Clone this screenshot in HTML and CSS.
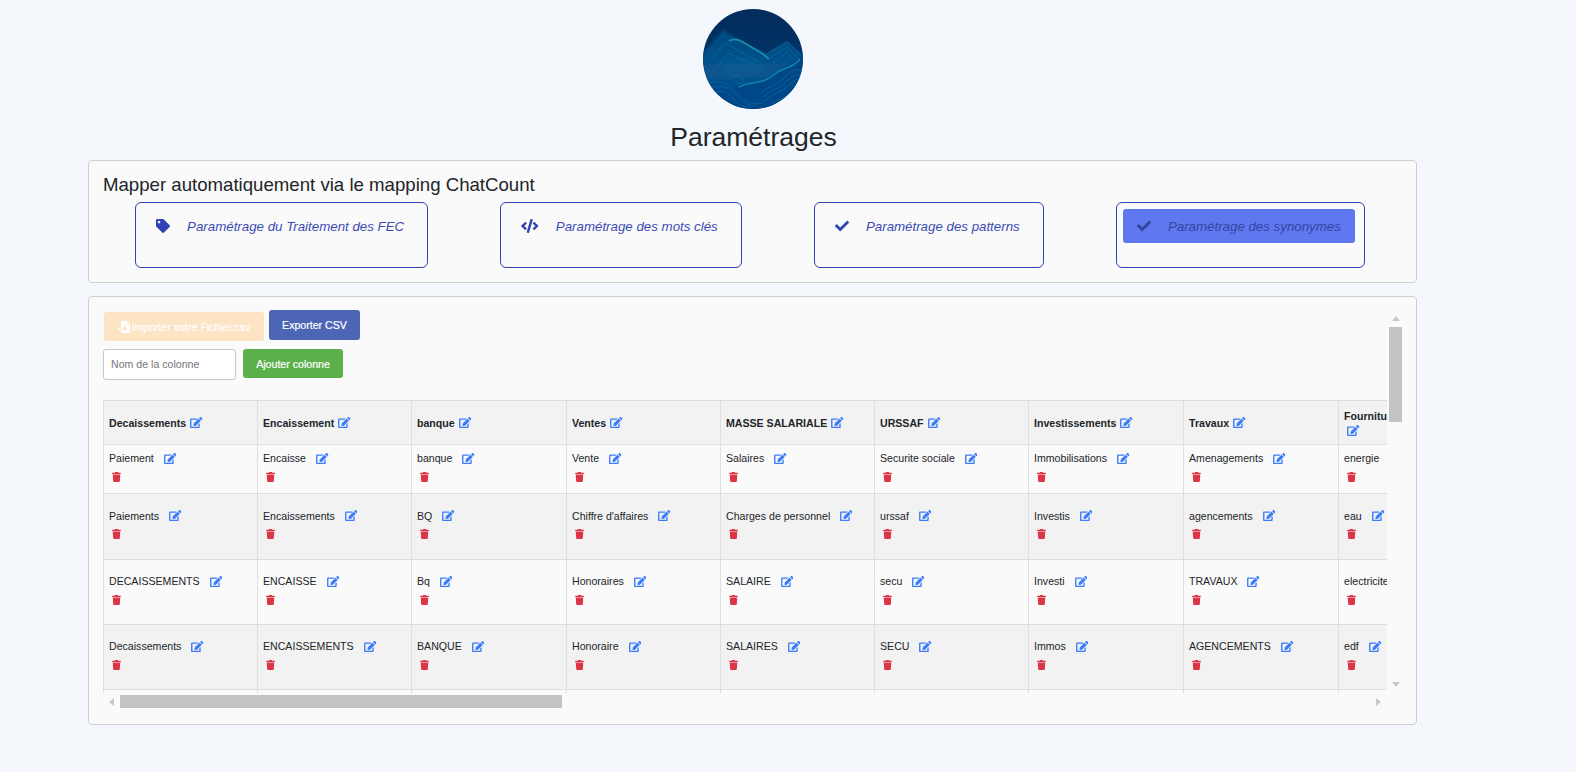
FILE: index.html
```html
<!DOCTYPE html>
<html lang="fr">
<head>
<meta charset="utf-8">
<title>Paramétrages</title>
<link rel="stylesheet" href="styles.css">
</head>
<body>
<svg class="sprite" aria-hidden="true">
  <symbol id="i-edit" viewBox="0 0 576 512"><path d="M402.6 83.2l90.2 90.2c3.8 3.8 3.8 10 0 13.8L274.4 405.6l-92.8 10.3c-12.4 1.4-22.9-9.1-21.5-21.5l10.3-92.8L388.8 83.2c3.8-3.8 10-3.8 13.8 0zm162-22.9l-48.8-48.8c-15.2-15.2-39.9-15.2-55.2 0l-35.4 35.4c-3.8 3.8-3.8 10 0 13.8l90.2 90.2c3.8 3.8 10 3.8 13.8 0l35.4-35.4c15.2-15.3 15.2-40 0-55.2zM384 346.2V448H64V128h229.8c3.2 0 6.2-1.3 8.5-3.5l40-40c7.6-7.6 2.2-20.5-8.5-20.5H48C21.5 64 0 85.5 0 112v352c0 26.5 21.5 48 48 48h352c26.5 0 48-21.5 48-48V306.2c0-10.7-12.9-16-20.5-8.5l-40 40c-2.2 2.3-3.5 5.3-3.5 8.5z"/></symbol>
  <symbol id="i-trash" viewBox="0 0 448 512"><path d="M432 32H312l-9.4-18.7A24 24 0 0 0 281.1 0H166.8a23.72 23.72 0 0 0-21.4 13.3L136 32H16A16 16 0 0 0 0 48v32a16 16 0 0 0 16 16h416a16 16 0 0 0 16-16V48a16 16 0 0 0-16-16zM53.2 467a48 48 0 0 0 47.9 45h245.8a48 48 0 0 0 47.9-45L416 128H32z"/></symbol>
  <symbol id="i-tag" viewBox="0 0 512 512"><path d="M0 252.118V48C0 21.49 21.49 0 48 0h204.118a48 48 0 0 1 33.941 14.059l211.882 211.882c18.745 18.745 18.745 49.137 0 67.882L293.823 497.941c-18.745 18.745-49.137 18.745-67.882 0L14.059 286.059A48 48 0 0 1 0 252.118zM112 64c-26.51 0-48 21.49-48 48s21.49 48 48 48 48-21.49 48-48-21.49-48-48-48z"/></symbol>
  <symbol id="i-code" viewBox="0 0 640 512"><path d="M278.9 511.5l-61-17.7c-6.4-1.8-10-8.5-8.2-14.9L346.2 8.7c1.8-6.4 8.5-10 14.9-8.2l61 17.7c6.4 1.8 10 8.5 8.2 14.9L293.8 503.3c-1.9 6.4-8.5 10.1-14.9 8.2zm-114-112.2l43.5-46.4c4.6-4.9 4.3-12.7-.8-17.2L117 256l90.6-79.7c5.1-4.5 5.5-12.3.8-17.2l-43.5-46.4c-4.5-4.8-12.1-5.1-17-.5L3.8 247.2c-5.1 4.7-5.1 12.8 0 17.5l144.1 135.1c4.9 4.6 12.5 4.4 17-.5zm327.2.6l144.1-135.1c5.1-4.7 5.1-12.8 0-17.5L492.1 112.1c-4.8-4.5-12.4-4.3-17 .5L431.6 159c-4.6 4.9-4.3 12.7.8 17.2L523 256l-90.6 79.7c-5.1 4.5-5.5 12.3-.8 17.2l43.5 46.4c4.5 4.9 12.1 5.1 17 .6z"/></symbol>
  <symbol id="i-check" viewBox="0 0 512 512"><path d="M173.898 439.404l-166.4-166.4c-9.997-9.997-9.997-26.206 0-36.204l36.203-36.204c9.997-9.998 26.207-9.998 36.204 0L192 312.69 432.095 72.596c9.997-9.997 26.207-9.997 36.204 0l36.203 36.204c9.997 9.997 9.997 26.206 0 36.204l-294.4 294.401c-9.998 9.997-26.207 9.997-36.204-.001z"/></symbol>
  <symbol id="i-import" viewBox="0 0 512 512"><path d="M16 288c-8.8 0-16 7.2-16 16v32c0 8.8 7.2 16 16 16h112v-64zm489-183L407.1 7c-4.5-4.5-10.6-7-17-7H384v128h128v-6.1c0-6.3-2.5-12.4-7-16.9zm-153 31V0H152c-13.3 0-24 10.7-24 24v264h128v-65.2c0-14.3 17.3-21.4 27.4-11.3L379 308c6.6 6.7 6.6 17.4 0 24l-95.7 96.4c-10.1 10.1-27.4 3-27.4-11.3V352H128v136c0 13.3 10.7 24 24 24h336c13.3 0 24-10.7 24-24V160H376c-13.2 0-24-10.8-24-24z"/></symbol>
</svg>

<main class="page">
  <svg class="logo" viewBox="0 0 100 100" role="img" aria-label="Logo">
    <defs>
      <linearGradient id="logo-sky" x1="0" y1="0" x2="0" y2="1">
        <stop offset="0" stop-color="#022c5c"/>
        <stop offset="1" stop-color="#03396f"/>
      </linearGradient>
      <linearGradient id="logo-hill" x1="0" y1="0" x2="0" y2="1">
        <stop offset="0" stop-color="#064a7f"/>
        <stop offset="0.55" stop-color="#07558e"/>
        <stop offset="1" stop-color="#053f88"/>
      </linearGradient>
      <filter id="logo-soft"><feGaussianBlur stdDeviation="0.8"/></filter>
      <filter id="logo-softer"><feGaussianBlur stdDeviation="0.25"/></filter>
      <clipPath id="logo-clip"><circle cx="50" cy="50" r="50"/></clipPath>
    </defs>
    <g clip-path="url(#logo-clip)">
      <rect width="100" height="100" fill="url(#logo-sky)"/>
      <g filter="url(#logo-soft)">
        <path d="M0 44L20 21L37 31L63 45L84 32L100 46V100H0Z" fill="url(#logo-hill)"/>
        <path d="M28 80C44 74 58 76 72 64C80 57 90 58 100 44V100H0V92C10 88 20 84 28 80Z" fill="#054688"/>
        <ellipse cx="40" cy="58" rx="20" ry="10" fill="#0a6596" opacity=".35"/>
      </g>
      <g filter="url(#logo-softer)" fill="none">
        <path d="M26 32C30 29.500 34 30 38 32L60 45L66 50" stroke="#1a9ab0" stroke-width="1.8" opacity=".85"/>
        <path d="M62 46L84 33L97 45" stroke="#0c6e96" stroke-width="1" opacity=".75"/>
        <path d="M36 78C46 72 60 76 72 65C80 58 90 60 97 50" stroke="#148fae" stroke-width="1.5" opacity=".85"/>
        <g stroke="#1a83b0" stroke-width=".55" opacity=".75">
          <path d="M6 74C16 70 24 74 34 84S50 96 60 94"/>
          <path d="M10 79C20 75 26 79 34 87S46 97 54 96"/>
          <path d="M10 84C20 80 26 84 32 91S42 98 48 98"/>
          <path d="M30 66C40 68 44 72 38 74S26 68 30 66Z"/>
          <path d="M58 84C66 76 76 76 82 68S96 60 98 62"/>
          <path d="M60 88C68 80 78 80 84 72S96 66 98 67"/>
          <path d="M62 92C70 84 78 84 86 76S96 70 98 72"/>
          <path d="M68 95C74 91 84 89 92 80"/>
          <path d="M8 50L22 34L40 44L56 52"/>
          <path d="M14 58L26 44L42 52L52 56"/>
          <path d="M68 48L84 38L94 48"/>
          <path d="M70 54L84 44L90 50"/>
        </g>
      </g>
    </g>
  </svg>
  <h1 class="page-title">Paramétrages</h1>

  <section class="panel panel-map">
    <h2 class="panel-title">Mapper automatiquement via le mapping ChatCount</h2>
    <div class="cards">
      <div class="card"><a class="card-link"><svg class="card-icon icon-square"><use href="#i-tag"/></svg><span>Paramétrage du Traitement des FEC</span></a></div>
      <div class="card"><a class="card-link"><svg class="card-icon icon-wide"><use href="#i-code"/></svg><span>Paramétrage des mots clés</span></a></div>
      <div class="card"><a class="card-link"><svg class="card-icon icon-square"><use href="#i-check"/></svg><span>Paramétrage des patterns</span></a></div>
      <div class="card"><a class="card-link is-active"><svg class="card-icon icon-square"><use href="#i-check"/></svg><span>Paramétrage des synonymes</span></a></div>
    </div>
  </section>

  <section class="panel panel-table">
    <div class="scroll-frame">
      <div class="scroll-view">
        <div class="action-row">
          <button class="btn btn-import" type="button"><svg class="btn-icon"><use href="#i-import"/></svg>Importer votre Fichier.csv</button>
          <button class="btn btn-export" type="button">Exporter CSV</button>
        </div>
        <div class="column-row">
          <input class="column-input" type="text" placeholder="Nom de la colonne">
          <button class="btn btn-add" type="button">Ajouter colonne</button>
        </div>
        <table class="grid">
          <colgroup>
            <col class="col-a"><col class="col-a"><col class="col-b"><col class="col-a"><col class="col-a"><col class="col-a"><col class="col-b"><col class="col-b"><col class="col-a">
          </colgroup>
          <thead>
            <tr>
              <th>Decaissements<svg class="ico-edit-head"><use href="#i-edit"/></svg></th>
              <th>Encaissement<svg class="ico-edit-head"><use href="#i-edit"/></svg></th>
              <th>banque<svg class="ico-edit-head"><use href="#i-edit"/></svg></th>
              <th>Ventes<svg class="ico-edit-head"><use href="#i-edit"/></svg></th>
              <th>MASSE SALARIALE<svg class="ico-edit-head"><use href="#i-edit"/></svg></th>
              <th>URSSAF<svg class="ico-edit-head"><use href="#i-edit"/></svg></th>
              <th>Investissements<svg class="ico-edit-head"><use href="#i-edit"/></svg></th>
              <th>Travaux<svg class="ico-edit-head"><use href="#i-edit"/></svg></th>
              <th>Fournitures<svg class="ico-edit-head ico-edit-wrapped"><use href="#i-edit"/></svg></th>
            </tr>
          </thead>
          <tbody>
            <tr class="row-short">
              <td><div class="line">Paiement<svg class="ico-edit"><use href="#i-edit"/></svg></div><svg class="ico-trash"><use href="#i-trash"/></svg></td>
              <td><div class="line">Encaisse<svg class="ico-edit"><use href="#i-edit"/></svg></div><svg class="ico-trash"><use href="#i-trash"/></svg></td>
              <td><div class="line">banque<svg class="ico-edit"><use href="#i-edit"/></svg></div><svg class="ico-trash"><use href="#i-trash"/></svg></td>
              <td><div class="line">Vente<svg class="ico-edit"><use href="#i-edit"/></svg></div><svg class="ico-trash"><use href="#i-trash"/></svg></td>
              <td><div class="line">Salaires<svg class="ico-edit"><use href="#i-edit"/></svg></div><svg class="ico-trash"><use href="#i-trash"/></svg></td>
              <td><div class="line">Securite sociale<svg class="ico-edit"><use href="#i-edit"/></svg></div><svg class="ico-trash"><use href="#i-trash"/></svg></td>
              <td><div class="line">Immobilisations<svg class="ico-edit"><use href="#i-edit"/></svg></div><svg class="ico-trash"><use href="#i-trash"/></svg></td>
              <td><div class="line">Amenagements<svg class="ico-edit"><use href="#i-edit"/></svg></div><svg class="ico-trash"><use href="#i-trash"/></svg></td>
              <td><div class="line">energie<svg class="ico-edit"><use href="#i-edit"/></svg></div><svg class="ico-trash"><use href="#i-trash"/></svg></td>
            </tr>
            <tr class="row-tall-a is-shaded">
              <td><div class="line">Paiements<svg class="ico-edit"><use href="#i-edit"/></svg></div><svg class="ico-trash"><use href="#i-trash"/></svg></td>
              <td><div class="line">Encaissements<svg class="ico-edit"><use href="#i-edit"/></svg></div><svg class="ico-trash"><use href="#i-trash"/></svg></td>
              <td><div class="line">BQ<svg class="ico-edit"><use href="#i-edit"/></svg></div><svg class="ico-trash"><use href="#i-trash"/></svg></td>
              <td><div class="line">Chiffre d'affaires<svg class="ico-edit"><use href="#i-edit"/></svg></div><svg class="ico-trash"><use href="#i-trash"/></svg></td>
              <td><div class="line">Charges de personnel<svg class="ico-edit"><use href="#i-edit"/></svg></div><svg class="ico-trash"><use href="#i-trash"/></svg></td>
              <td><div class="line">urssaf<svg class="ico-edit"><use href="#i-edit"/></svg></div><svg class="ico-trash"><use href="#i-trash"/></svg></td>
              <td><div class="line">Investis<svg class="ico-edit"><use href="#i-edit"/></svg></div><svg class="ico-trash"><use href="#i-trash"/></svg></td>
              <td><div class="line">agencements<svg class="ico-edit"><use href="#i-edit"/></svg></div><svg class="ico-trash"><use href="#i-trash"/></svg></td>
              <td><div class="line">eau<svg class="ico-edit"><use href="#i-edit"/></svg></div><svg class="ico-trash"><use href="#i-trash"/></svg></td>
            </tr>
            <tr class="row-tall">
              <td><div class="line">DECAISSEMENTS<svg class="ico-edit"><use href="#i-edit"/></svg></div><svg class="ico-trash"><use href="#i-trash"/></svg></td>
              <td><div class="line">ENCAISSE<svg class="ico-edit"><use href="#i-edit"/></svg></div><svg class="ico-trash"><use href="#i-trash"/></svg></td>
              <td><div class="line">Bq<svg class="ico-edit"><use href="#i-edit"/></svg></div><svg class="ico-trash"><use href="#i-trash"/></svg></td>
              <td><div class="line">Honoraires<svg class="ico-edit"><use href="#i-edit"/></svg></div><svg class="ico-trash"><use href="#i-trash"/></svg></td>
              <td><div class="line">SALAIRE<svg class="ico-edit"><use href="#i-edit"/></svg></div><svg class="ico-trash"><use href="#i-trash"/></svg></td>
              <td><div class="line">secu<svg class="ico-edit"><use href="#i-edit"/></svg></div><svg class="ico-trash"><use href="#i-trash"/></svg></td>
              <td><div class="line">Investi<svg class="ico-edit"><use href="#i-edit"/></svg></div><svg class="ico-trash"><use href="#i-trash"/></svg></td>
              <td><div class="line">TRAVAUX<svg class="ico-edit"><use href="#i-edit"/></svg></div><svg class="ico-trash"><use href="#i-trash"/></svg></td>
              <td><div class="line">electricite<svg class="ico-edit"><use href="#i-edit"/></svg></div><svg class="ico-trash"><use href="#i-trash"/></svg></td>
            </tr>
            <tr class="row-tall is-shaded">
              <td><div class="line">Decaissements<svg class="ico-edit"><use href="#i-edit"/></svg></div><svg class="ico-trash"><use href="#i-trash"/></svg></td>
              <td><div class="line">ENCAISSEMENTS<svg class="ico-edit"><use href="#i-edit"/></svg></div><svg class="ico-trash"><use href="#i-trash"/></svg></td>
              <td><div class="line">BANQUE<svg class="ico-edit"><use href="#i-edit"/></svg></div><svg class="ico-trash"><use href="#i-trash"/></svg></td>
              <td><div class="line">Honoraire<svg class="ico-edit"><use href="#i-edit"/></svg></div><svg class="ico-trash"><use href="#i-trash"/></svg></td>
              <td><div class="line">SALAIRES<svg class="ico-edit"><use href="#i-edit"/></svg></div><svg class="ico-trash"><use href="#i-trash"/></svg></td>
              <td><div class="line">SECU<svg class="ico-edit"><use href="#i-edit"/></svg></div><svg class="ico-trash"><use href="#i-trash"/></svg></td>
              <td><div class="line">Immos<svg class="ico-edit"><use href="#i-edit"/></svg></div><svg class="ico-trash"><use href="#i-trash"/></svg></td>
              <td><div class="line">AGENCEMENTS<svg class="ico-edit"><use href="#i-edit"/></svg></div><svg class="ico-trash"><use href="#i-trash"/></svg></td>
              <td><div class="line">edf<svg class="ico-edit"><use href="#i-edit"/></svg></div><svg class="ico-trash"><use href="#i-trash"/></svg></td>
            </tr>
            <tr class="row-tall">
              <td></td><td></td><td></td><td></td><td></td><td></td><td></td><td></td><td></td>
            </tr>
          </tbody>
        </table>
      </div>
      <div class="vbar">
        <div class="bar-btn"><span class="arrow arrow-up"></span></div>
        <div class="thumb thumb-v"></div>
        <div class="bar-fill"></div>
        <div class="bar-btn"><span class="arrow arrow-down"></span></div>
      </div>
      <div class="hbar">
        <div class="bar-btn"><span class="arrow arrow-left"></span></div>
        <div class="thumb thumb-h"></div>
        <div class="bar-fill"></div>
        <div class="bar-btn"><span class="arrow arrow-right"></span></div>
      </div>
    </div>
  </section>
</main>
</body>
</html>
```
FILE: styles.css
```css
* { box-sizing: border-box; }

html, body { margin: 0; height: 100%; overflow: hidden; }

body {
  background: #f4f7fb;
  color: #212529;
  font-family: "Liberation Sans", Arial, sans-serif;
}

.sprite { display: none; }

.page {
  width: 1329px;
  margin-left: 88px;
  padding-top: 9px;
}

.logo {
  display: block;
  width: 100px;
  height: 100px;
  margin: 0 auto;
}

.page-title {
  margin: 13px 0 8px;
  padding-left: 2px;
  font-size: 26.5px;
  line-height: 30px;
  font-weight: 400;
  text-align: center;
}

.panel {
  background: #fafafa;
  border: 1px solid #cfcfcf;
  border-radius: 4px;
}

.panel-map {
  height: 123px;
  padding: 13px 14px 0;
}

.panel-title {
  margin: 0 0 7px;
  font-size: 18.64px;
  line-height: 21px;
  font-weight: 400;
}

.cards {
  display: flex;
  justify-content: space-around;
  margin: 0 1px 0 -4px;
}

.card {
  height: 66px;
  padding: 6px 9px 0 6px;
  background: #fafafa;
  border: 1px solid #2f43b3;
  border-radius: 6px;
}

.card-link {
  display: flex;
  align-items: center;
  height: 34px;
  padding: 0 14px;
  border-radius: 3px;
  color: #3a4cb4;
  font-size: 13.3px;
  font-style: italic;
}

.card-link.is-active {
  background: #6078ef;
  color: #33459f;
}

.card-icon {
  height: 14px;
  margin-right: 17px;
  fill: currentColor;
  flex: none;
}

.card-link:not(.is-active) .card-icon { color: #2f43b3; }

.icon-square { width: 14px; }
.icon-wide { width: 17.5px; }

.panel-table {
  height: 429px;
  margin-top: 13px;
  padding: 13px 13px 0 14px;
}

.scroll-frame {
  display: grid;
  grid-template-columns: 1284px 16px;
  grid-template-rows: 383px 16px;
}

.scroll-view { overflow: hidden; }

.vbar,
.hbar { display: flex; }

.vbar {
  flex-direction: column;
  padding: 0 1px 0 2px;
}

.hbar {
  padding: 2px 0 1px;
}

.bar-fill { flex: 1; }

.bar-btn {
  display: flex;
  align-items: center;
  justify-content: center;
  flex: none;
}

.vbar .bar-btn { height: 17px; }
.hbar .bar-btn { width: 17px; }

.thumb { background: #c3c3c3; flex: none; }
.thumb-v { height: 95px; }
.thumb-h { width: 442px; }

.arrow {
  width: 0;
  height: 0;
  border: 0 solid transparent;
}

.arrow-up { border-width: 0 4px 5px; border-bottom-color: #c8c8c8; }
.arrow-down { border-width: 5px 4px 0; border-top-color: #c8c8c8; }
.arrow-left { border-width: 4px 5px 4px 0; border-right-color: #c8c8c8; }
.arrow-right { border-width: 4px 0 4px 5px; border-left-color: #c8c8c8; }

.action-row {
  display: flex;
  align-items: flex-start;
  gap: 5px;
  height: 39px;
}

.column-row {
  display: flex;
  align-items: flex-start;
  gap: 7px;
  height: 51px;
}

.btn {
  display: flex;
  align-items: center;
  justify-content: center;
  padding: 0;
  border: 0;
  border-radius: 3px;
  color: #fff;
  font-family: inherit;
  font-size: 10.6px;
  font-weight: 400;
  -webkit-text-stroke: 0.2px #fff;
}

.btn-import {
  width: 160px;
  height: 29px;
  margin: 2px 0 0 1px;
  background: #fde4c5;
}

.btn-icon {
  width: 12px;
  height: 12px;
  margin-right: 2px;
  fill: #fff;
  flex: none;
}

.btn-export {
  width: 91px;
  height: 30px;
  background: #4d65b5;
}

.btn-add {
  width: 100px;
  height: 29px;
  background: #5bb04c;
}

.column-input {
  width: 133px;
  height: 31px;
  padding: 0 7px 2px;
  background: #fff;
  border: 1px solid #c8c8c8;
  border-radius: 3px;
  font-family: inherit;
  font-size: 10.6px;
}

.column-input::placeholder { color: #757575; }

.grid {
  width: 1390px;
  table-layout: fixed;
  border-collapse: collapse;
  font-size: 10.6px;
}

.col-a { width: 154px; }
.col-b { width: 155px; }

.grid th,
.grid td {
  padding: 0 5px;
  border: 1px solid #dedede;
  text-align: left;
  vertical-align: middle;
}

.grid td { padding-bottom: 4px; }

.grid th {
  height: 44px;
  background: #f2f2f2;
  color: #212529;
  font-weight: 700;
}

.row-short td { height: 49px; }
.row-tall-a td { height: 66px; }
.row-tall td { height: 65px; }

.is-shaded td { background: #f2f2f2; }

.line {
  height: 14px;
  line-height: 12px;
  white-space: nowrap;
}

.ico-edit,
.ico-edit-head {
  width: 12.5px;
  height: 11px;
  fill: #3b7cfb;
  vertical-align: -1.5px;
}

.ico-edit { margin-left: 10px; }
.ico-edit-head { margin-left: 4px; }

.ico-edit-wrapped {
  display: block;
  margin: 3px 0 0 3px;
}

.ico-trash {
  display: block;
  width: 9px;
  height: 10px;
  margin: 5.5px 0 0 3px;
  fill: #dc3545;
}
```
